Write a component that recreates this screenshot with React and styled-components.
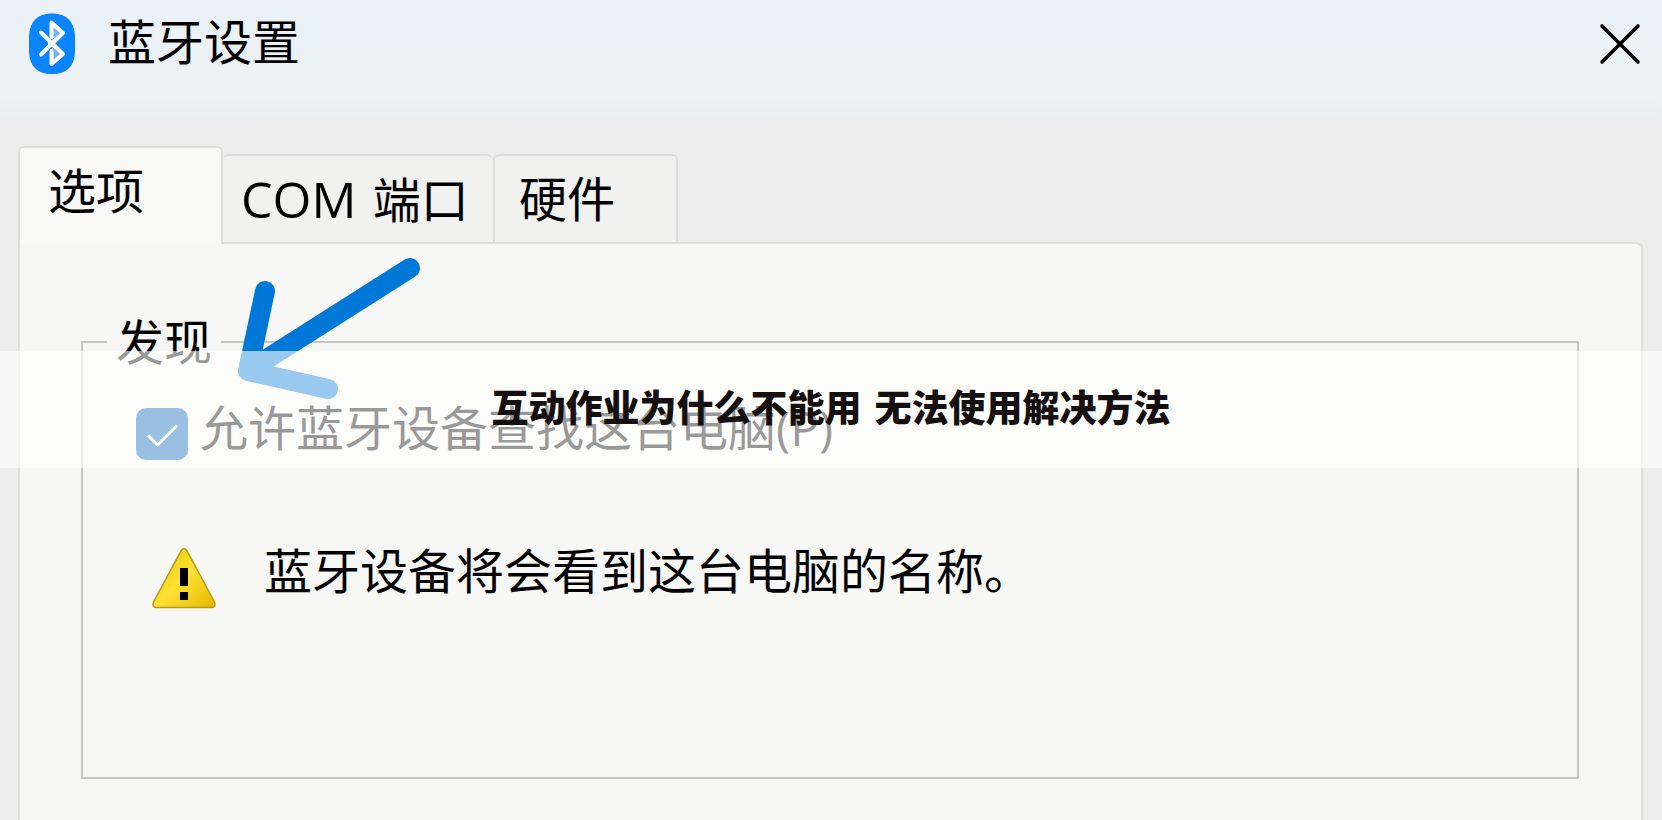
import React, { useState } from "react";
import styled, { createGlobalStyle } from "styled-components";

const GlobalStyle = createGlobalStyle`
  * {
    box-sizing: border-box;
  }

  body {
    margin: 0;
    background: #ededed;
    color: #000;
    font-family: "Open Sans", "Noto Sans CJK SC", sans-serif;
    font-size: 48px;
    line-height: 48px;
  }

  button {
    font: inherit;
    color: inherit;
  }
`;

const Dialog = styled.main`
  display: flex;
  flex-direction: column;
  min-height: 100vh;
  overflow: hidden;
  background: linear-gradient(#eaf1f7 0, #ecf2f5 98px, #ededed 124px);
`;

const TitleBar = styled.header`
  display: flex;
  align-items: center;
  gap: 32px;
  height: 88px;
  padding: 0 20px 0 28px;
`;

const Title = styled.h1`
  flex: 1;
  margin: 0;
  padding-bottom: 4px;
  font-size: 48px;
  font-weight: 400;
`;

const CloseButton = styled.button`
  display: flex;
  padding: 0;
  border: 0;
  background: none;
`;

const TabList = styled.div`
  display: flex;
  align-items: flex-end;
  height: 95px;
  margin: 59px 18px 0;
`;

const Tab = styled.button`
  height: ${(props) => (props.$active ? "96px" : "88px")};
  width: ${(props) => props.$width};
  padding: ${(props) => (props.$active ? "0 28px 8px" : "0 0 0 18px")};
  padding-left: ${(props) => props.$indent};
  border: 2px solid #dedede;
  border-left-width: ${(props) => (props.$joined ? "0" : "2px")};
  border-right-width: ${(props) => (props.$joined ? "0" : "2px")};
  border-bottom: 0;
  border-radius: 6px 6px 0 0;
  background: ${(props) => (props.$active ? "#f9f9f8" : "#f1f1f0")};
  text-align: left;
  white-space: nowrap;
`;

const Latin = styled.span`
  margin-right: 4px;
  font-size: 50px;
`;

const Panel = styled.section`
  position: relative;
  flex: 1;
  margin: 0 19px 0 18px;
  padding: 76px 62px 40px 61px;
  border: 2px solid #dedede;
  border-bottom: 0;
  border-top: 0;
  border-top-right-radius: 6px;
  background: #f7f7f6;
  box-shadow: inset 0 2px 0 #dedede;

  /* opens the frame under the first tab */
  &::before {
    content: "";
    position: absolute;
    left: 0;
    top: 0;
    width: 201px;
    height: 2px;
    background: #f8f8f7;
  }
`;

const Group = styled.fieldset`
  min-width: 0;
  height: 461px;
  margin: 0;
  padding: 38px 52px 0 53px;
  border: 2px solid #c6c6c6;
`;

const Legend = styled.legend`
  margin-left: -29px;
  padding: 0 9px;
`;

const CheckRow = styled.label`
  display: flex;
  align-items: flex-start;
  gap: 12px;
  white-space: nowrap;
`;

const CheckBox = styled.input`
  appearance: none;
  flex: none;
  width: 52px;
  height: 52px;
  margin: 4px 0 0;
  border-radius: 10px;
  background: #005fb8;
  display: grid;
  place-items: center;

  &:checked::after {
    content: "";
    width: 26px;
    height: 12px;
    margin-top: -6px;
    border-left: 3px solid #fff;
    border-bottom: 3px solid #fff;
    transform: rotate(-45deg);
  }
`;

const Warning = styled.p`
  display: flex;
  align-items: flex-start;
  gap: 48px;
  margin: 87px 0 0;
  padding-left: 16px;
  white-space: nowrap;
`;

const Arrow = styled.svg`
  position: absolute;
  left: 218px;
  top: 15px;
  pointer-events: none;
`;

const Banner = styled.div`
  position: absolute;
  left: 0;
  right: 0;
  top: 351px;
  height: 117px;
  display: flex;
  align-items: center;
  justify-content: center;
  z-index: 2;
  background: rgba(255, 255, 255, 0.6);
  color: #150f0f;
  font-family: "DejaVu Sans", "Noto Sans CJK SC", sans-serif;
  font-size: 37px;
  font-weight: 900;
  white-space: nowrap;
  pointer-events: none;
`;

const BluetoothIcon = () => (
  <svg width="48" height="62" viewBox="0 0 48 62" aria-hidden="true">
    <path
      d="M24 0.500C39 0.500 47 9 47 25V37C47 53 39 61 24 61S1 53 1 37V25C1 9 9 0.500 24 0.500Z"
      fill="#0a84ff"
    />
    <path d="M24 11V28L35 19.500ZM24 34V50L35 41Z" fill="#6fb6f5" />
    <path
      d="M13 19.500L35 41L23.500 51V38M23.500 24V9.500L35 20L13 41.500"
      fill="none"
      stroke="#fff"
      strokeWidth="4"
      strokeLinecap="round"
      strokeLinejoin="round"
    />
    <path d="M20 25L23.500 28L27 25V36L23.500 33L20 36Z" fill="#fff" />
  </svg>
);

const CloseIcon = () => (
  <svg width="44" height="44" viewBox="0 0 44 44" aria-hidden="true">
    <path
      d="M4 4L40 40M40 4L4 40"
      stroke="#000"
      strokeWidth="3.600"
      strokeLinecap="round"
    />
  </svg>
);

const WarningIcon = () => (
  <svg width="64" height="62" viewBox="0 0 64 62" aria-hidden="true">
    <defs>
      <linearGradient id="warn" x1="0" y1="0" x2="1" y2="1">
        <stop offset="0" stopColor="#e8c800" />
        <stop offset="0.5" stopColor="#fde133" />
        <stop offset="1" stopColor="#e6b800" />
      </linearGradient>
    </defs>
    <path
      d="M29.500 3Q32 0 34.500 3L62.500 55Q64 60 60 60.500H4Q0 60 1.500 55Z"
      fill="url(#warn)"
      stroke="#b49a18"
      strokeWidth="1.500"
    />
    <path d="M28 21H36V39H28ZM28 45H36V53H28Z" fill="#000" />
  </svg>
);

const tabs = [
  { id: "options", label: "选项", width: "205px" },
  {
    id: "com",
    label: (
      <>
        <Latin>COM</Latin> 端口
      </>
    ),
    width: "270px",
    indent: "18px",
  },
  { id: "hardware", label: "硬件", width: "185px", indent: "24px" },
];

const App = () => {
  const [active, setActive] = useState(0);

  return (
    <>
      <GlobalStyle />
      <Dialog>
        <TitleBar>
          <BluetoothIcon />
          <Title>蓝牙设置</Title>
          <CloseButton aria-label="关闭">
            <CloseIcon />
          </CloseButton>
        </TitleBar>
        <TabList role="tablist">
          {tabs.map((tab, index) => (
            <Tab
              key={tab.id}
              role="tab"
              aria-selected={active === index}
              $active={active === index}
              $joined={index === 1}
              $width={tab.width}
              $indent={tab.indent}
              onClick={() => setActive(index)}
            >
              {tab.label}
            </Tab>
          ))}
        </TabList>
        <Panel role="tabpanel">
          <Group>
            <Legend>发现</Legend>
            <CheckRow>
              <CheckBox type="checkbox" defaultChecked />
              <span>允许蓝牙设备查找这台电脑(P)</span>
            </CheckRow>
            <Warning>
              <WarningIcon />
              <span>蓝牙设备将会看到这台电脑的名称。</span>
            </Warning>
          </Group>
          <Arrow width="220" height="150" viewBox="238 256 220 150">
            <path
              d="M410 267L248 370L265 290M248 370L328 388"
              fill="none"
              stroke="#0078d7"
              strokeWidth="20"
              strokeLinecap="round"
              strokeLinejoin="round"
            />
          </Arrow>
        </Panel>
      </Dialog>
      <Banner>互动作业为什么不能用 无法使用解决方法</Banner>
    </>
  );
};

export default App;
